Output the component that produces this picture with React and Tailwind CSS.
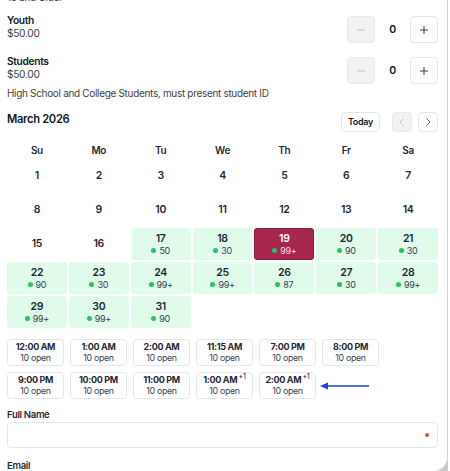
import React, { useState } from 'react';

const tickets = [
  { name: 'Youth', price: '$50.00' },
  { name: 'Students', price: '$50.00', note: 'High School and College Students, must present student ID' },
];

const availability = {
  17: '50', 18: '30', 19: '99+', 20: '90', 21: '30',
  22: '90', 23: '30', 24: '99+', 25: '99+', 26: '87', 27: '30', 28: '99+',
  29: '99+', 30: '99+', 31: '90',
};

const slots = [
  { time: '12:00 AM' },
  { time: '1:00 AM' },
  { time: '2:00 AM' },
  { time: '11:15 AM' },
  { time: '7:00 PM' },
  { time: '8:00 PM' },
  { time: '9:00 PM' },
  { time: '10:00 PM' },
  { time: '11:00 PM' },
  { time: '1:00 AM', next: true },
  { time: '2:00 AM', next: true },
];

const weekdays = ['Su', 'Mo', 'Tu', 'We', 'Th', 'Fr', 'Sa'];

const ChevronLeft = () => (
  <svg width="10" height="10" viewBox="0 0 10 10" fill="none" stroke="currentColor" strokeWidth="1">
    <path d="M6.5 1.5 3 5l3.5 3.5" />
  </svg>
);

const ChevronRight = () => (
  <svg width="10" height="10" viewBox="0 0 10 10" fill="none" stroke="currentColor" strokeWidth="1">
    <path d="M3.5 1.5 7 5 3.5 8.5" />
  </svg>
);

const TicketRow = ({ ticket, count }) => (
  <div>
    <div className="flex items-start justify-between">
      <div className="-mt-[2px] leading-[13px]">
        <div className="text-[10.2px] font-semibold text-[#111827]">{ticket.name}</div>
        <div className="text-[10.2px] text-[#3f3f46]">{ticket.price}</div>
      </div>
      <div className="flex items-center">
        <button className="w-[28px] h-[27px] rounded-[4px] bg-[#f1f2f4] border border-[#e8e9ec] flex items-center justify-center text-[#c4c7cc]">
          <svg width="10" height="10" viewBox="0 0 10 10" stroke="currentColor" strokeWidth="1">
            <path d="M1 5h8" />
          </svg>
        </button>
        <span className="w-[35px] text-center text-[10.5px] font-semibold text-[#111827]">{count}</span>
        <button className="w-[28px] h-[27px] rounded-[4px] bg-white border border-[#e5e7eb] flex items-center justify-center text-[#374151]">
          <svg width="10" height="10" viewBox="0 0 10 10" stroke="currentColor" strokeWidth="1">
            <path d="M1 5h8M5 1v8" />
          </svg>
        </button>
      </div>
    </div>
    {ticket.note && (
      <p className="mt-[2px] text-[10px] leading-[14px] text-[#3f3f46]">{ticket.note}</p>
    )}
  </div>
);

export default function App() {
  const [selected, setSelected] = useState(19);
  const days = Array.from({ length: 31 }, (_, i) => i + 1);

  return (
    <div
      className="flex h-[471px] overflow-hidden bg-[#c9c9c9] tracking-[-0.02em]"
      style={{ fontFamily: 'Inter, "Liberation Sans", sans-serif' }}
    >
      <div className="w-[448px] h-full bg-white border-r border-[#d6d6d6] rounded-br-[14px] overflow-hidden pl-[7px] pr-[9px]">
        <p className="-mt-[10px] text-[10px] leading-[14px] text-[#3f3f46]">18 and Older</p>

        <div className="mt-[12px] flex flex-col gap-[14px]">
          <TicketRow ticket={tickets[0]} count={0} />
          <TicketRow ticket={tickets[1]} count={0} />
        </div>

        {/* Calendar */}
        <div className="mt-[12px] flex items-start justify-between">
          <h2 className="text-[11.2px] leading-[14px] font-semibold text-[#111827]">March 2026</h2>
          <div className="flex items-center">
            <button className="h-[20px] px-[6px] rounded-[4px] border border-[#e5e7eb] bg-white text-[9px] font-semibold text-[#111827]">
              Today
            </button>
            <button className="ml-[12px] w-[20px] h-[20px] rounded-[4px] bg-[#f1f2f4] border border-[#e8e9ec] flex items-center justify-center text-[#c4c7cc]">
              <ChevronLeft />
            </button>
            <button className="ml-[6px] w-[20px] h-[20px] rounded-[4px] bg-white border border-[#e5e7eb] flex items-center justify-center text-[#4b5563]">
              <ChevronRight />
            </button>
          </div>
        </div>

        <div className="mt-[10px] grid grid-cols-7 gap-[2px] h-[16px] items-center">
          {weekdays.map((d) => (
            <div key={d} className="text-center text-[10px] font-semibold text-[#1f2937]">{d}</div>
          ))}
        </div>

        <div className="mt-[2px] grid grid-cols-7 gap-[2px]">
          {days.map((day) => {
            const count = availability[day];
            const isSelected = selected === day;
            if (!count) {
              return (
                <div key={day} className="h-[32px] flex items-center justify-center text-[10.5px] font-semibold text-[#1f2937]">
                  {day}
                </div>
              );
            }
            return (
              <button
                key={day}
                onClick={() => setSelected(day)}
                className={
                  isSelected
                    ? 'h-[32px] rounded-[3px] bg-[#a8264d] border border-[#8f1c3f] flex flex-col items-center justify-center'
                    : 'h-[32px] rounded-[3px] bg-[#e0fbe9] flex flex-col items-center justify-center'
                }
              >
                <span className={isSelected ? 'text-[10.5px] leading-[13px] font-semibold text-white' : 'text-[10.5px] leading-[13px] font-semibold text-[#1f2937]'}>
                  {day}
                </span>
                <span className={isSelected ? 'flex items-center gap-[3px] text-[9px] leading-[12px] text-[#f6dbe3]' : 'flex items-center gap-[3px] text-[9px] leading-[12px] text-[#374151]'}>
                  <span className="w-[5px] h-[5px] rounded-full bg-[#22c55e]" />
                  {count}
                </span>
              </button>
            );
          })}
        </div>

        {/* Time slots */}
        <div className="mt-[11px] flex flex-wrap items-center gap-x-[6px] gap-y-[6px]">
          {slots.map((s, i) => (
            <button
              key={i}
              className="w-[57px] h-[27px] rounded-[4px] border border-[#e5e7eb] bg-white flex flex-col items-center justify-center"
            >
              <span className="text-[9px] leading-[10.5px] font-bold text-[#1f2937]">
                {s.time}
                {s.next && <sup className="ml-[1px] text-[7.5px] font-normal">+1</sup>}
              </span>
              <span className="text-[8.8px] leading-[10.5px] text-[#374151]">10 open</span>
            </button>
          ))}
          <svg width="50" height="10" viewBox="0 0 50 10" className="ml-[-2px]">
            <path d="M6 5h43" stroke="#1d3fe0" strokeWidth="1.6" />
            <path d="M0 5 8 1.5v7z" fill="#1d3fe0" />
          </svg>
        </div>

        {/* Form */}
        <label className="mt-[9px] block text-[9.5px] leading-[13px] font-semibold text-[#1f2937]">Full Name</label>
        <div className="mt-[1px] h-[26px] rounded-[4px] border border-[#e5e7eb] flex items-center justify-end pr-[8px]">
          <span className="w-[4px] h-[4px] rounded-full bg-[#ef4444]" />
        </div>
        <label className="mt-[11px] block text-[9.5px] leading-[13px] font-semibold text-[#1f2937]">Email</label>
      </div>
      <div className="w-[2px] bg-white" />
    </div>
  );
}
